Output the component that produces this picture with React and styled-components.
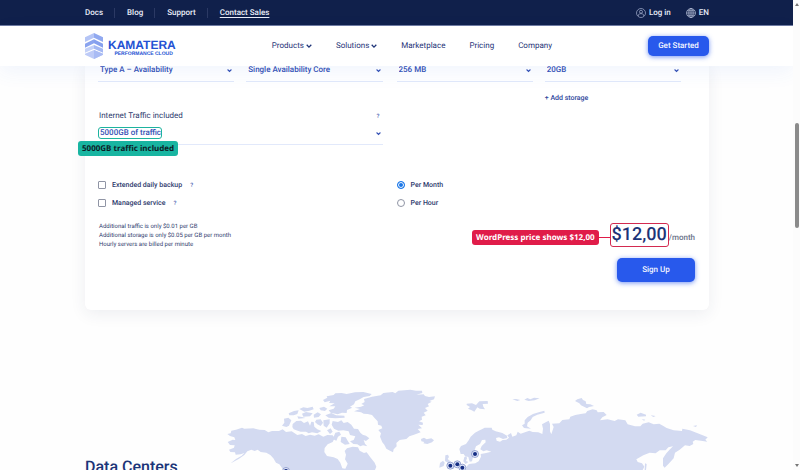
import React from "react";
import styled, { createGlobalStyle } from "styled-components";

const Global = createGlobalStyle`
  *, *::before, *::after { box-sizing: border-box; }
  html, body, #root { height: 100%; }
  body { margin: 0; background: #fefefe; color: #2f3c6e; font: 400 8px/12px Roboto, sans-serif; overflow: hidden; text-rendering: geometricPrecision; }
  a { color: inherit; text-decoration: none; }
  button, select, input { font: inherit; color: inherit; margin: 0; text-rendering: inherit; }
  svg { display: block; flex: none; }
`;

const Window = styled.div`
  display: grid;
  grid-template-columns: minmax(0, 1fr) 7px;
  height: 100vh;
  overflow: hidden;
`;

const Page = styled.div`
  height: 100vh;
  overflow: hidden;
`;

const TopBar = styled.div`
  display: flex;
  justify-content: space-between;
  align-items: center;
  padding: 0 84px 0 85px;
  height: 26px;
  background: #10204b;
  border-bottom: 1px solid #6f7ba2;
  color: #e9edf8;
  font-weight: 500;
`;

const TopLinks = styled.nav`
  display: flex;
  align-items: center;
`;

const TopLink = styled.a`
  padding: 0 11px 0 0;
  text-decoration: ${(p) => (p.$underlined ? "underline" : "none")};
  text-underline-offset: 2px;
  line-height: 10px;
  & + & {
    padding-left: 12px;
    border-left: 1px solid #2b3964;
  }
`;

const TopActions = styled.div`
  display: flex;
  gap: 15px;
`;

const IconLink = styled.a`
  display: flex;
  align-items: center;
  gap: 3px;
`;

const Header = styled.header`
  position: relative;
  z-index: 1;
  display: flex;
  justify-content: space-between;
  align-items: center;
  height: 40px;
  padding: 0 84px 0 85px;
  background: #fff;
  box-shadow: 0 6px 20px rgba(60, 120, 230, 0.07);
`;

const Logo = styled.a`
  display: flex;
  align-items: center;
  gap: 5px;
  font-family: "Liberation Sans", Arial, sans-serif;
  font-weight: 700;
  color: #2452d3;
`;

const LogoText = styled.span`
  display: flex;
  flex-direction: column;
  align-items: flex-end;
  padding-top: 4px;
`;

const LogoName = styled.span`
  font-size: 12px;
  line-height: 12px;
`;

const LogoTagline = styled.span`
  font-size: 5px;
  line-height: 7px;
  padding-right: 3px;
`;

const MainNav = styled.nav`
  display: flex;
  gap: 24px;
  font-weight: 400;
  color: #1f3478;
`;

const NavLink = styled.a`
  display: flex;
  align-items: center;
  gap: 2px;
`;

const PrimaryButton = styled.button`
  border: 0;
  padding: 0;
  width: ${(p) => (p.$large ? "78px" : "61px")};
  height: ${(p) => (p.$large ? "24px" : "20px")};
  border-radius: 5px;
  background: #2859ec;
  color: #f3f6ff;
  font-weight: 500;
  box-shadow: 0 1px 5px rgba(40, 89, 236, 0.65);
`;

const Card = styled.main`
  margin: -2px 84px 0 85px;
  padding: 0 14px 28px 13px;
  background: #fff;
  border-radius: 0 0 6px 6px;
  box-shadow: 0 4px 16px rgba(40, 50, 90, 0.08);
`;

const Halves = styled.div`
  display: grid;
  grid-template-columns: 1fr 1fr;
  column-gap: 14px;
  margin-right: 14px;
`;

const Pair = styled.div`
  display: grid;
  grid-template-columns: 1fr 1fr;
  column-gap: 12px;
`;

const Field = styled.div`
  position: relative;
  height: ${(p) => (p.$tall ? "23px" : "18px")};
  border-bottom: 1px solid #e2e9fb;
  color: #3350b4;
`;

const Control = styled.span`
  display: grid;
  align-items: center;
  height: ${(p) => (p.$tall ? "22px" : "12px")};
  & > * {
    grid-area: 1 / 1;
  }
  & > svg {
    justify-self: end;
    margin-right: 2px;
    pointer-events: none;
  }
`;

const Select = styled.select`
  appearance: none;
  width: 100%;
  height: 12px;
  padding: 0 2px;
  border: 0;
  background: transparent;
  font-weight: 500;
  line-height: 12px;
`;

const AddStorage = styled.button`
  grid-column: 2;
  justify-self: start;
  border: 0;
  padding: 0;
  margin-top: 10px;
  background: none;
  color: #2f479c;
  font-size: 7px;
  line-height: 12px;
  font-weight: 500;
`;

const FieldLabel = styled.div`
  display: flex;
  justify-content: space-between;
  align-items: center;
  margin-top: 6px;
  padding-right: 3px;
  padding-left: 1px;
`;

const Help = styled.span`
  padding-top: 2px;
  color: #4059ad;
  font-size: 6px;
  line-height: 10px;
  font-weight: 500;
`;

const Highlight = styled.span`
  position: absolute;
  left: 0;
  top: 5px;
  width: 64px;
  height: 12px;
  border: 1px solid #1db39f;
  border-radius: 3px;
  pointer-events: none;
`;

const Callout = styled.span`
  position: absolute;
  white-space: nowrap;
  font: 700 8px/15px "Noto Sans", sans-serif;
  padding: 0 4px;
  border-radius: 3px;
`;

const TealCallout = styled(Callout)`
  left: -20px;
  top: 19px;
  background: #18b5a1;
  color: #0c2127;
`;

const RedCallout = styled(Callout)`
  right: calc(100% + 12px);
  top: 6px;
  background: #e01c49;
  color: #fff;
  &::after {
    content: "";
    position: absolute;
    left: 100%;
    top: 7px;
    width: 12px;
    height: 1px;
    background: #e01c49;
  }
`;

const Options = styled(Halves)`
  margin-top: 34px;
`;

const OptionList = styled.div`
  display: grid;
  gap: 6px;
`;

const Option = styled.div`
  display: flex;
  align-items: center;
  height: 12px;
  font-size: 7px;
  font-weight: 500;
`;

const OptionLabel = styled.label`
  display: flex;
  align-items: center;
  gap: 6px;
  margin-right: 8px;
`;

const Tick = styled.input`
  appearance: none;
  width: 8px;
  height: 8px;
  border: 1px solid #9095a5;
  border-radius: ${(p) => (p.type === "radio" ? "50%" : "1px")};
  background: #fff;
  &:checked {
    border-color: #1976e8;
    background: #1976e8;
    box-shadow: inset 0 0 0 1px #fff;
  }
`;

const Summary = styled.div`
  display: flex;
  justify-content: space-between;
  margin-top: 13px;
`;

const Notes = styled.div`
  padding-left: 1px;
  font-size: 6px;
  line-height: 9px;
`;

const Order = styled.div`
  display: flex;
  flex-direction: column;
  align-items: flex-end;
  gap: 11px;
  margin-top: 1px;
`;

const PriceLine = styled.div`
  display: flex;
  align-items: center;
  color: #6c7289;
`;

const Per = styled.span`
  padding-top: 6px;
  font-weight: 500;
  line-height: 12px;
`;

const Price = styled.span`
  position: relative;
  padding: 0 1px;
  border: 1px solid #d32a50;
  border-radius: 3px;
  background: #fff;
`;

const Amount = styled.strong`
  display: block;
  font-size: 18px;
  line-height: 22px;
  font-weight: 500;
  color: #1d3478;
`;

const DataCenters = styled.section`
  display: grid;
  grid-template-columns: 135px minmax(0, 1fr);
  margin: 75px 84px 0 85px;
`;

const Heading = styled.h2`
  margin: 70px 0 0;
  font-size: 16px;
  line-height: 24px;
  font-weight: 500;
  color: #1c3578;
  white-space: nowrap;
`;

const Map = styled.svg`
  width: 100%;
  height: auto;
  overflow: visible;
`;

const ScrollTrack = styled.div`
  display: grid;
  grid-template-rows: 9px 114fr 105fr 233fr 9px;
  justify-items: center;
  align-items: center;
  background: #fcfcfc;
`;

const Thumb = styled.span`
  grid-row: 3;
  width: 4px;
  height: 100%;
  border-radius: 2px;
  background: #8b8b8b;
`;

const ScrollArrow = styled.svg`
  grid-row: ${(p) => (p.$down ? 5 : 1)};
`;

const Chevron = ({ size = 5 }) => (
  <svg width={size} height={size} viewBox="0 0 6 6" fill="none" stroke="currentColor" strokeWidth="1.3" aria-hidden="true">
    <path d="M0.7 1.8 3 4.1 5.3 1.8" />
  </svg>
);

const LogoMark = () => (
  <svg width="18" height="26" viewBox="0 0 54 78" aria-hidden="true">
    <path fill="#b5c5f6" d="M0 13 27 0v14L0 27z" />
    <path fill="#91a9f0" d="M27 0 54 13v14L27 14z" />
    <path fill="#8ba4ef" d="M0 32 27 19v12L0 44z" />
    <path fill="#86a0ee" d="M27 19 54 32v12L27 31z" />
    <path fill="#c4d1f8" d="M0 47 27 36v11L0 59z" />
    <path fill="#a4b8f3" d="M27 36 54 47v12L27 47z" />
    <path fill="#becbf7" d="M0 62 27 51 54 62v3L27 78 0 65z" />
    <path fill="#a9bbf4" d="M27 51 54 62v3L27 78z" />
  </svg>
);

const UserIcon = () => (
  <svg width="10" height="10" viewBox="0 0 20 20" fill="none" stroke="#aab5d3" strokeWidth="1.4" aria-hidden="true">
    <circle cx="10" cy="10" r="9" />
    <circle cx="10" cy="7.5" r="3" />
    <path d="M4.8 16v-1.5c0-2 2-3.2 5.2-3.2s5.2 1.2 5.2 3.2V16" />
  </svg>
);

const GlobeIcon = () => (
  <svg width="10" height="10" viewBox="0 0 20 20" fill="none" stroke="#c2cbe2" strokeWidth="1.3" aria-hidden="true">
    <circle cx="10" cy="10" r="9" />
    <ellipse cx="10" cy="10" rx="4.3" ry="9" />
    <path d="M1 10h18M10 1v18M2.5 5.5h15M2.5 14.5h15" />
  </svg>
);

const land = [
  "M22 147 32 145 34 137 48 134 66 128 73 131 100 130 118 134 134 135 145 142 156 138 177 138 188 133 198 141 215 139 232 150 246 147 257 153 270 149 284 152 296 148 310 155 322 150 338 151 344 159 338 171 323 178 314 189 313 201 321 213 341 217 353 222 361 233 367 250 376 251 383 236 375 223 378 209 374 198 381 190 398 185 414 187 419 197 432 204 440 202 451 217 464 233 469 245 465 255 190 255 184 246 178 238 168 233 160 220 151 210 139 203 122 201 113 194 104 198 94 194 82 199 73 210 56 222 38 232 32 235 48 222 65 212 73 204 62 208 47 209 45 202 31 201 27 194 42 188 44 181 30 180 23 171 38 164 46 165 43 157 30 153z",
  "M192 101 205 98 214 106 207 122 199 126 186 122 193 113z",
  "M218 117 229 108 243 107 252 114 264 109 270 122 274 110 281 111 283 125 292 133 304 138 292 145 276 142 266 145 258 140 242 140 233 137 221 133 217 126z",
  "M206 85 222 78 236 76 232 87 221 91 208 91zM238 72 250 67 262 69 278 65 281 73 268 77 253 80zM246 86 258 81 278 85 270 94 250 95zM281 89 293 82 303 88 296 96 282 98zM232 94 246 96 257 99 235 101zM289 104 302 103 309 113 302 123 292 118 285 111zM316 91 334 84 348 91 373 92 374 98 346 100 326 98zM298 69 312 65 322 71 315 78 302 76z",
  "M309 45 322 38 320 34 341 30 346 25 365 24 380 27 405 22 430 21 455 27 449 33 431 36 419 43 406 49 402 58 390 65 397 68 381 75 380 84 366 83 353 88 332 83 326 76 341 71 346 64 328 64 344 55 327 54 331 47 314 52z",
  "M310 106 329 103 329 115 320 128 311 122zM338 108 354 111 364 106 371 114 383 111 394 119 402 131 414 132 421 143 428 149 438 152 448 160 438 168 431 165 435 176 442 184 429 181 421 184 412 178 400 177 390 169 401 165 406 154 390 150 386 139 370 136 355 137 342 131 335 119zM346 143 358 140 363 149 354 155 349 167 338 162zM321 136 332 130 338 140 330 147zM364 155 377 157 382 166 389 177 375 179 362 171z",
  "M456 35 482 31 490 24 518 21 526 25 535 17 571 14 588 17 606 17 607 24 589 29 611 28 615 33 627 36 645 34 642 43 628 48 635 50 623 57 627 64 615 69 623 77 611 83 617 91 605 95 606 104 597 109 609 113 608 120 595 119 606 130 593 132 602 142 582 149 568 154 559 162 539 165 529 174 530 184 521 193 519 202 510 197 499 191 493 179 487 172 480 155 483 145 475 135 487 130 484 122 474 119 473 109 463 98 456 90 443 87 431 86 423 82 402 79 420 72 404 68 423 65 433 61 424 57 434 51 432 42z",
  "M603 162 612 158 620 163 634 160 642 166 636 172 622 177 610 175 613 171 604 169z",
  "M740 56 756 55 768 60 778 49 803 48 804 56 788 57 790 65 795 73 779 71 772 67 763 80 755 76 744 71 750 66 740 60z",
  "M676 211 684 209 687 216 683 222 691 229 694 239 704 244 702 251 685 252 688 243 679 240 684 233 675 228zM660 234 669 227 674 233 671 243 658 248z",
  "M877 43 888 42 901 45 892 48zM913 44 922 39 931 43 942 38 959 40 944 46 926 48z",
  "M1065 48 1072 43 1085 39 1089 45 1097 49 1099 57 1111 58 1122 63 1107 66 1101 70 1083 61 1078 55z",
  "M1250 89 1262 83 1278 89 1278 94 1255 95zM1292 91 1307 93 1300 96zM1265 102 1276 104 1272 107zM1419 123 1431 121 1428 126z",
  "M906 121 914 116 914 106 923 96 939 87 956 82 973 77 974 83 952 89 938 96 932 106 923 113 921 124 933 131 912 129z",
  "M718 192 723 183 738 177 746 166 752 155 765 143 776 137 787 132 794 128 815 128 817 134 827 139 847 144 861 152 862 159 849 162 837 157 828 159 830 167 840 170 848 165 859 164 867 158 862 151 873 144 877 155 889 151 893 140 902 146 915 142 928 137 938 141 955 142 967 147 969 131 966 118 977 112 986 107 990 117 990 139 994 148 1001 126 996 116 1018 115 1027 105 1048 103 1051 95 1066 90 1082 87 1097 85 1102 78 1118 73 1130 76 1133 82 1151 81 1160 90 1147 97 1140 106 1163 103 1184 108 1194 103 1216 106 1223 118 1245 124 1261 124 1268 116 1286 112 1301 118 1318 116 1330 123 1340 129 1361 136 1386 138 1387 131 1410 136 1433 145 1463 157 1456 164 1462 170 1443 167 1426 165 1418 170 1420 177 1409 183 1395 181 1379 194 1365 203 1361 220 1346 236 1334 248 1329 242 1329 220 1339 205 1350 193 1359 184 1345 187 1337 196 1319 196 1307 205 1289 203 1270 211 1249 223 1253 231 1266 235 1273 245 1268 255 738 255 739 245 747 237 766 235 776 229 783 215 782 207 795 205 814 200 800 196 790 199 781 193 785 183 797 172 796 164 786 165 780 177 768 184 764 195 768 203 759 216 756 229 749 230 745 216 735 213 731 207 722 207z",
  "M733 216 739 213 741 220 738 228 745 231 737 237 730 229zM1275 235 1280 237 1278 255 1274 255z",
];

const pins = [
  [198, 258],
  [691, 242],
  [712, 238],
  [727, 248],
  [765, 207],
];

const WorldMap = () => (
  <Map viewBox="0 0 1467 255" role="img" aria-label="Map of data centers">
    <g fill="#d3daf1">
      {land.map((d) => (
        <path key={d} d={d} />
      ))}
    </g>
    {pins.map(([x, y]) => (
      <g key={x}>
        <circle cx={x} cy={y} r="10.5" fill="#e3e9fa" stroke="#7181bd" strokeWidth="2" />
        <circle cx={x} cy={y} r="6" fill="#152d83" />
      </g>
    ))}
  </Map>
);

const PlanSelect = ({ label, value, tall, children }) => (
  <Field $tall={tall}>
    <Control $tall={tall}>
      <Select aria-label={label} defaultValue={value}>
        <option>{value}</option>
      </Select>
      <Chevron />
    </Control>
    {children}
  </Field>
);

export default function App() {
  return (
    <>
      <Global />
      <Window>
        <Page>
          <TopBar>
            <TopLinks>
              <TopLink href="#docs">Docs</TopLink>
              <TopLink href="#blog">Blog</TopLink>
              <TopLink href="#support">Support</TopLink>
              <TopLink href="#sales" $underlined>Contact Sales</TopLink>
            </TopLinks>
            <TopActions>
              <IconLink href="#login"><UserIcon />Log in</IconLink>
              <IconLink href="#language"><GlobeIcon />EN</IconLink>
            </TopActions>
          </TopBar>
          <Header>
            <Logo href="#home">
              <LogoMark />
              <LogoText>
                <LogoName>KAMATERA</LogoName>
                <LogoTagline>PERFORMANCE CLOUD</LogoTagline>
              </LogoText>
            </Logo>
            <MainNav>
              <NavLink href="#products">Products<Chevron size={6} /></NavLink>
              <NavLink href="#solutions">Solutions<Chevron size={6} /></NavLink>
              <NavLink href="#marketplace">Marketplace</NavLink>
              <NavLink href="#pricing">Pricing</NavLink>
              <NavLink href="#company">Company</NavLink>
            </MainNav>
            <PrimaryButton>Get Started</PrimaryButton>
          </Header>
          <Card>
            <Halves>
              <Pair>
                <PlanSelect label="Server type" value="Type A – Availability" />
                <PlanSelect label="CPU" value="Single Availability Core" />
              </Pair>
              <Pair>
                <PlanSelect label="Memory" value="256 MB" />
                <PlanSelect label="Storage" value="20GB" />
                <AddStorage>+ Add storage</AddStorage>
              </Pair>
            </Halves>
            <Halves>
              <div>
                <FieldLabel>Internet Traffic included<Help>?</Help></FieldLabel>
                <PlanSelect label="Internet Traffic included" value="5000GB of traffic" tall>
                  <Highlight />
                  <TealCallout>5000GB traffic included</TealCallout>
                </PlanSelect>
              </div>
            </Halves>
            <Options>
              <OptionList>
                <Option>
                  <OptionLabel><Tick type="checkbox" />Extended daily backup</OptionLabel>
                  <Help>?</Help>
                </Option>
                <Option>
                  <OptionLabel><Tick type="checkbox" />Managed service</OptionLabel>
                  <Help>?</Help>
                </Option>
              </OptionList>
              <OptionList>
                <Option>
                  <OptionLabel><Tick type="radio" name="billing" defaultChecked />Per Month</OptionLabel>
                </Option>
                <Option>
                  <OptionLabel><Tick type="radio" name="billing" />Per Hour</OptionLabel>
                </Option>
              </OptionList>
            </Options>
            <Summary>
              <Notes>
                Additional traffic is only $0.01 per GB
                <br />
                Additional storage is only $0.05 per GB per month
                <br />
                Hourly servers are billed per minute
              </Notes>
              <Order>
                <PriceLine>
                  <Price>
                    <Amount>$12,00</Amount>
                    <RedCallout>WordPress price shows $12,00</RedCallout>
                  </Price>
                  <Per>/month</Per>
                </PriceLine>
                <PrimaryButton $large>Sign Up</PrimaryButton>
              </Order>
            </Summary>
          </Card>
          <DataCenters>
            <Heading>Data Centers</Heading>
            <WorldMap />
          </DataCenters>
        </Page>
        <ScrollTrack aria-hidden="true">
          <ScrollArrow width="4" height="3" viewBox="0 0 4 3"><path d="M0 3 2 0 4 3z" fill="#777" /></ScrollArrow>
          <Thumb />
          <ScrollArrow $down width="4" height="3" viewBox="0 0 4 3"><path d="M0 0 2 3 4 0z" fill="#777" /></ScrollArrow>
        </ScrollTrack>
      </Window>
    </>
  );
}
